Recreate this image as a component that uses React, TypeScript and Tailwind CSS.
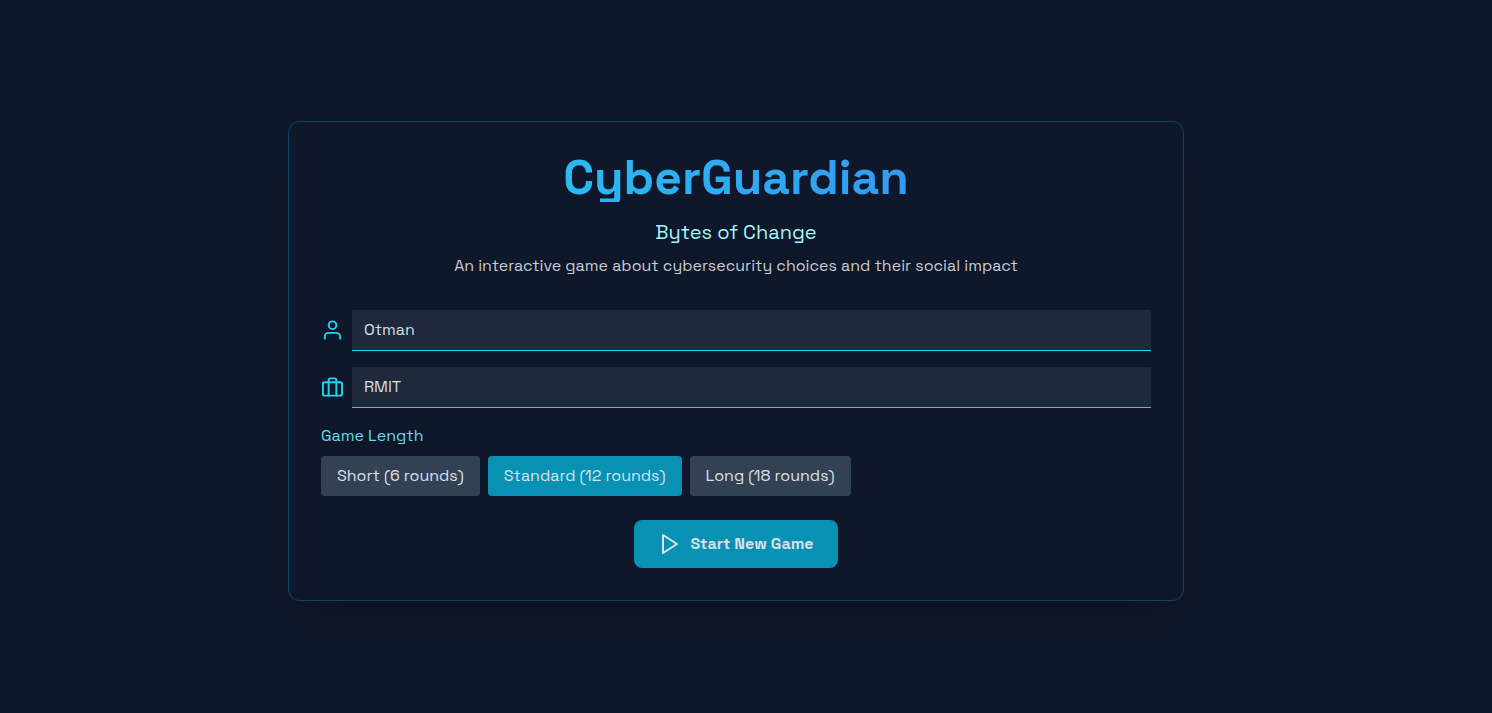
import { useState } from "react";
import type { ReactNode } from "react";

const lengths = [
  { id: "short", label: "Short (6 rounds)" },
  { id: "standard", label: "Standard (12 rounds)" },
  { id: "long", label: "Long (18 rounds)" },
];

const inputClass =
  "min-w-0 flex-1 border-b border-[#22d3ee] bg-[#1e293b] px-3 py-2 text-[#d8dde5] outline-none";

function Icon({ className, children }: { className: string; children: ReactNode }) {
  return (
    <svg
      className={className}
      viewBox="0 0 24 24"
      fill="none"
      stroke="currentColor"
      strokeWidth="2"
      strokeLinecap="round"
      strokeLinejoin="round"
      aria-hidden="true"
    >
      {children}
    </svg>
  );
}

export default function App() {
  const [name, setName] = useState("Otman");
  const [organisation, setOrganisation] = useState("RMIT");
  const [length, setLength] = useState("standard");

  return (
    <div className="flex min-h-screen items-center justify-center bg-[#0f172a] pt-2 pr-5 font-['Space_Grotesk','Inter',sans-serif] text-base font-[450] text-[#dbe2ea]">
      <main className="w-full max-w-4xl rounded-xl border border-[#06b6d4]/30 bg-[#0f172a] p-8 shadow-[0_25px_40px_-16px_rgba(0,0,0,0.25)]">
        <header className="mb-8 text-center">
          <h1 className="mb-4 bg-linear-to-r/srgb from-[#22d3ee] to-[#3b82f6] bg-clip-text text-5xl leading-none font-bold text-transparent">
            CyberGuardian
          </h1>
          <h2 className="mb-2 text-xl font-[450] text-[#a5f3fc]">Bytes of Change</h2>
          <p className="text-[#c8ccd2]">
            An interactive game about cybersecurity choices and their social impact
          </p>
        </header>
        <form className="flex flex-col" onSubmit={(e) => e.preventDefault()}>
          <div className="flex flex-col gap-4">
            <div className="flex items-center gap-2">
              <Icon className="h-6 w-[23px] shrink-0 text-[#22d3ee]">
                <path d="M20 21v-2a4 4 0 0 0-4-4H8a4 4 0 0 0-4 4v2" />
                <circle cx="12" cy="7" r="4" />
              </Icon>
              <input
                aria-label="Your name"
                className={inputClass}
                value={name}
                onChange={(e) => setName(e.target.value)}
              />
            </div>
            <div className="flex items-center gap-2">
              <Icon className="h-6 w-[23px] shrink-0 text-[#22d3ee]">
                <rect x="2" y="7" width="20" height="14" rx="2" ry="2" />
                <path d="M16 21V5a2 2 0 0 0-2-2h-4a2 2 0 0 0-2 2v16" />
              </Icon>
              <input
                aria-label="Organisation"
                className={inputClass}
                value={organisation}
                onChange={(e) => setOrganisation(e.target.value)}
              />
            </div>
          </div>
          <div role="group" aria-labelledby="length-label" className="mt-4">
            <div id="length-label" className="mb-2 text-[#62dcec]">
              Game Length
            </div>
            <div className="flex flex-wrap gap-2">
              {lengths.map((item) => (
                <button
                  key={item.id}
                  type="button"
                  aria-pressed={length === item.id}
                  onClick={() => setLength(item.id)}
                  className={`rounded px-4 py-2 text-center ${
                    length === item.id ? "bg-[#0891b2]" : "bg-[#334155]"
                  }`}
                >
                  {item.label}
                </button>
              ))}
            </div>
          </div>
          <button
            type="submit"
            className="mt-6 flex items-center gap-2 self-center rounded-lg bg-[#0891b2] px-6 py-3 font-bold"
          >
            <Icon className="size-6">
              <polygon points="5 3 19 12 5 21 5 3" />
            </Icon>
            Start New Game
          </button>
        </form>
      </main>
    </div>
  );
}
